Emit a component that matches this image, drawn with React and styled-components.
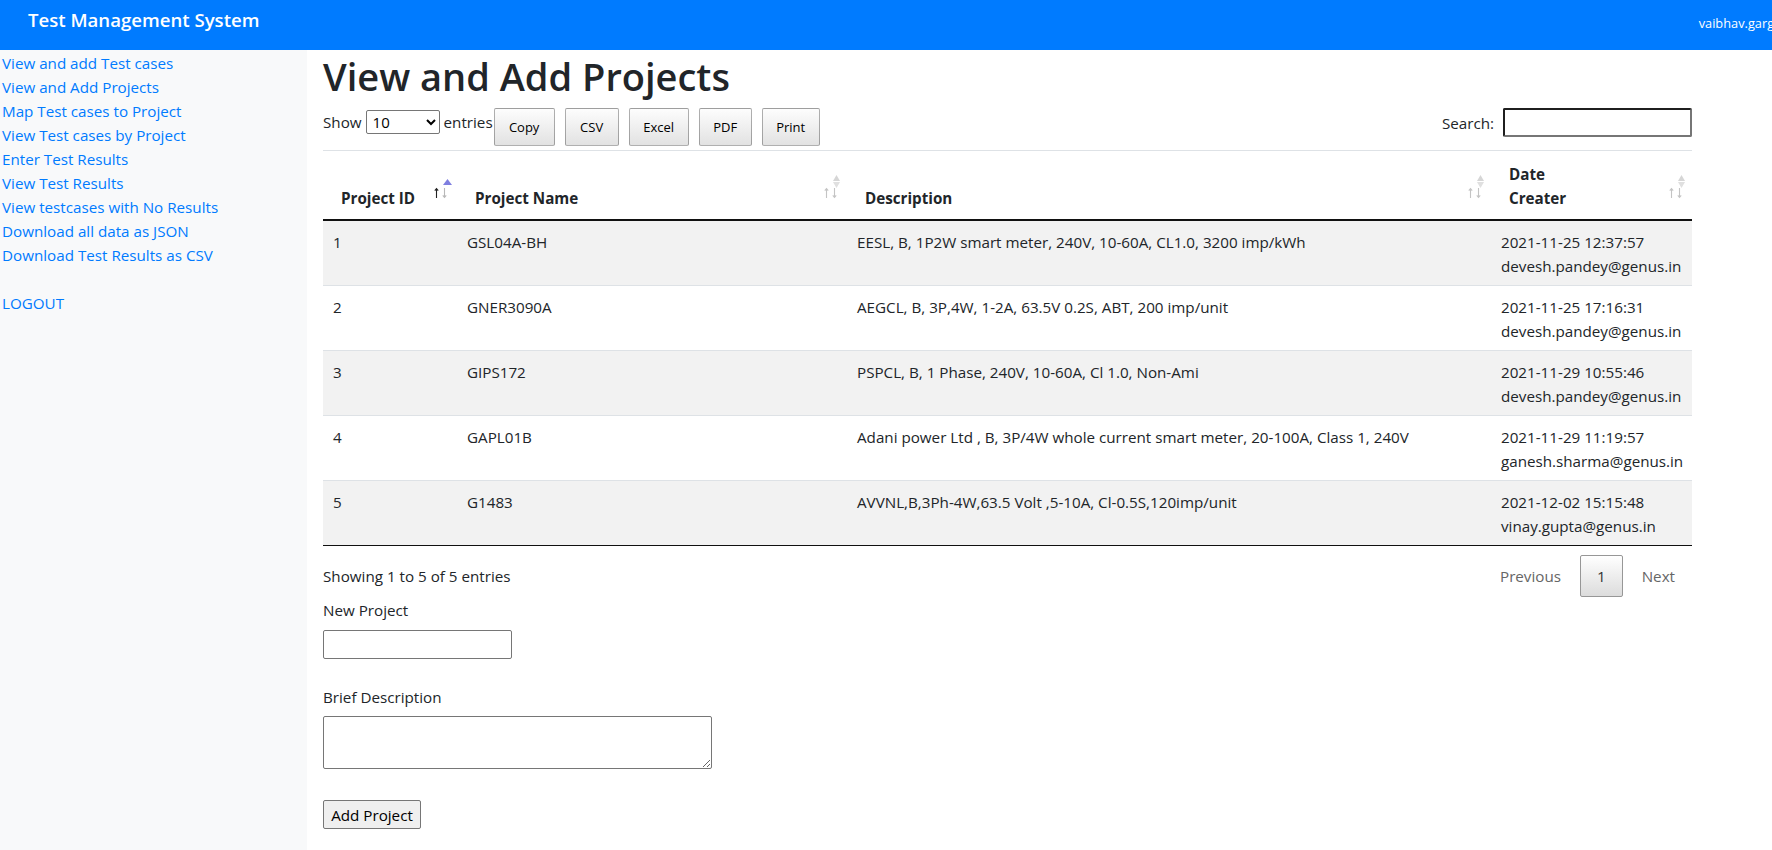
import React from 'react';
import styled, { createGlobalStyle } from 'styled-components';

const GlobalStyle = createGlobalStyle`
  body {
    margin: 0;
    font-family: "Open Sans", "Noto Sans", sans-serif;
    font-size: 15.2px;
    color: #212529;
    background: #fff;
    overflow: hidden;
  }
`;

const Nav = styled.nav`
  height: 50px;
  background: #007bff;
  display: flex;
  align-items: flex-start;
  padding-left: 28px;
  overflow: hidden;
`;

const Brand = styled.a`
  color: #fff;
  font-size: 18.6px;
  font-weight: 600;
  line-height: 24px;
  padding-top: 8px;
  text-decoration: none;
  white-space: nowrap;
`;

const User = styled.span`
  margin-left: auto;
  margin-right: -64px;
  padding-top: 13px;
  color: #fff;
  font-size: 12.8px;
  line-height: 20px;
  white-space: nowrap;
`;

const Layout = styled.div`
  display: flex;
  min-height: calc(100vh - 50px);
`;

const Sidebar = styled.aside`
  width: 307px;
  flex-shrink: 0;
  background: #f8f9fa;
  padding-top: 1px;
`;

const SideLink = styled.a`
  display: block;
  padding-left: 2px;
  line-height: 24px;
  color: #007bff;
  text-decoration: none;
  margin-top: ${(p) => (p.$spaced ? '24px' : '0')};
`;

const Main = styled.main`
  width: 1369px;
  padding: 2px 0 0 16px;
`;

const Heading = styled.h1`
  margin: 0 0 8px;
  font-size: 38px;
  font-weight: 600;
  line-height: 48px;
  color: #212529;
`;

const Toolbar = styled.div`
  display: flex;
  align-items: flex-start;
  height: 42px;
`;

const Length = styled.label`
  display: flex;
  align-items: center;
  height: 28px;
  gap: 4px;
`;

const Select = styled.select`
  width: 74px;
  height: 24px;
  font-family: inherit;
  font-size: 15px;
  border: 1px solid #767676;
  border-radius: 2px;
  background: #fff;
  color: #000;
  padding: 0 2px;
`;

const Buttons = styled.div`
  display: flex;
  gap: 10px;
  margin-left: 1px;
`;

const DtButton = styled.button`
  width: ${(p) => p.$w}px;
  height: 38px;
  padding: 0;
  font-family: inherit;
  font-size: 13px;
  color: #000;
  border: 1px solid rgba(0, 0, 0, 0.3);
  border-radius: 2px;
  background: linear-gradient(to bottom, #fdfdfd 0%, #e2e2e2 100%);
`;

const Search = styled.label`
  margin-left: auto;
  display: flex;
  align-items: center;
  gap: 9px;
  height: 29px;
`;

const SearchInput = styled.input`
  width: 189px;
  height: 29px;
  box-sizing: border-box;
  border: 2px solid;
  border-color: #1f1f1f #767676 #767676 #1f1f1f;
  border-radius: 2px;
  font-family: inherit;
`;

const Table = styled.table`
  width: 1369px;
  border-collapse: collapse;
  table-layout: fixed;
`;

const Th = styled.th`
  position: relative;
  width: ${(p) => p.$w}px;
  box-sizing: border-box;
  text-align: left;
  vertical-align: bottom;
  padding: 11px 18px 9px 18px;
  line-height: 24px;
  font-weight: 700;
  color: #212529;
  border-top: 1px solid #dee2e6;
  border-bottom: 2px solid #111;
`;

const Row = styled.tr`
  background: ${(p) => (p.$odd ? '#f2f2f2' : '#fff')};
  &:last-child td {
    border-bottom: 1px solid #111;
  }
`;

const Td = styled.td`
  vertical-align: top;
  padding: 9px 10px 7px;
  line-height: 24px;
  border-top: 1px solid #dee2e6;
`;

const IconBox = styled.span`
  position: absolute;
  right: 5px;
  bottom: 20px;
  width: 18px;
  height: 24px;
`;

const Footer = styled.div`
  display: flex;
  align-items: center;
  justify-content: space-between;
  padding-top: 9px;
`;

const Paginate = styled.div`
  display: flex;
  align-items: center;
  gap: 2px;
`;

const PageButton = styled.span`
  box-sizing: border-box;
  padding: 8px 16px;
  line-height: 24px;
  border-radius: 2px;
  color: ${(p) => (p.$current ? '#333' : '#666')};
  border: 1px solid ${(p) => (p.$current ? '#979797' : 'transparent')};
  background: ${(p) =>
    p.$current ? 'linear-gradient(to bottom, #fff 0%, #dcdcdc 100%)' : 'transparent'};
`;

const Form = styled.form`
  display: flex;
  flex-direction: column;
  align-items: flex-start;
  padding-top: 1px;
`;

const Label = styled.label`
  line-height: 24px;
  margin-top: ${(p) => p.$top || 0}px;
`;

const TextInput = styled.input`
  width: 189px;
  height: 29px;
  box-sizing: border-box;
  margin-top: 8px;
  border: 1px solid #767676;
  border-radius: 2px;
`;

const TextArea = styled.textarea`
  width: 389px;
  height: 53px;
  box-sizing: border-box;
  margin-top: 7px;
  border: 1px solid #767676;
  border-radius: 2px;
  resize: both;
`;

const Submit = styled.button`
  margin-top: 31px;
  width: 98px;
  height: 29px;
  padding: 0;
  font-family: inherit;
  font-size: 15.2px;
  color: #000;
  background: #efefef;
  border: 1px solid #767676;
  border-radius: 2px;
`;

const SortIcon = ({ active }) => (
  <IconBox>
    <svg width="18" height="24" viewBox="0 0 18 24">
      <path
        d="M2.5 13.5V23M0.8 15.6L2.5 13.5L4.2 15.6"
        fill="none"
        stroke={active ? '#222' : '#c4c4c4'}
        strokeWidth="1.1"
      />
      <path
        d="M10.5 13V22.5M8.8 20.4L10.5 22.5L12.2 20.4"
        fill="none"
        stroke={active ? '#b8b8b8' : '#c4c4c4'}
        strokeWidth="1.1"
      />
      {active ? (
        <polygon points="13.5,4 18,10 9,10" fill="#7f7fe0" />
      ) : (
        <>
          <polygon points="12.5,0 16,6 9,6" fill="#d6d6d6" />
          <polygon points="9,7 16,7 12.5,13" fill="#e0e0e0" />
        </>
      )}
    </svg>
  </IconBox>
);

const links = [
  'View and add Test cases',
  'View and Add Projects',
  'Map Test cases to Project',
  'View Test cases by Project',
  'Enter Test Results',
  'View Test Results',
  'View testcases with No Results',
  'Download all data as JSON',
  'Download Test Results as CSV',
];

const projects = [
  ['1', 'GSL04A-BH', 'EESL, B, 1P2W smart meter, 240V, 10-60A, CL1.0, 3200 imp/kWh', '2021-11-25 12:37:57', 'devesh.pandey@genus.in'],
  ['2', 'GNER3090A', 'AEGCL, B, 3P,4W, 1-2A, 63.5V 0.2S, ABT, 200 imp/unit', '2021-11-25 17:16:31', 'devesh.pandey@genus.in'],
  ['3', 'GIPS172', 'PSPCL, B, 1 Phase, 240V, 10-60A, Cl 1.0, Non-Ami', '2021-11-29 10:55:46', 'devesh.pandey@genus.in'],
  ['4', 'GAPL01B', 'Adani power Ltd , B, 3P/4W whole current smart meter, 20-100A, Class 1, 240V', '2021-11-29 11:19:57', 'ganesh.sharma@genus.in'],
  ['5', 'G1483', 'AVVNL,B,3Ph-4W,63.5 Volt ,5-10A, Cl-0.5S,120imp/unit', '2021-12-02 15:15:48', 'vinay.gupta@genus.in'],
];

export default function App() {
  return (
    <>
      <GlobalStyle />
      <Nav>
        <Brand href="#">Test Management System</Brand>
        <User>vaibhav.garg@genus.in</User>
      </Nav>
      <Layout>
        <Sidebar>
          {links.map((l) => (
            <SideLink key={l} href="#">{l}</SideLink>
          ))}
          <SideLink href="#" $spaced>LOGOUT</SideLink>
        </Sidebar>
        <Main>
          <Heading>View and Add Projects</Heading>
          <Toolbar>
            <Length>
              Show
              <Select defaultValue="10">
                <option>10</option>
                <option>25</option>
                <option>50</option>
                <option>100</option>
              </Select>
              entries
            </Length>
            <Buttons>
              <DtButton $w={61}>Copy</DtButton>
              <DtButton $w={54}>CSV</DtButton>
              <DtButton $w={60}>Excel</DtButton>
              <DtButton $w={53}>PDF</DtButton>
              <DtButton $w={58}>Print</DtButton>
            </Buttons>
            <Search>
              Search:
              <SearchInput type="search" />
            </Search>
          </Toolbar>
          <Table>
            <thead>
              <tr>
                <Th $w={134}>Project ID<SortIcon active /></Th>
                <Th $w={390}>Project Name<SortIcon /></Th>
                <Th $w={644}>Description<SortIcon /></Th>
                <Th $w={201}>Date<br />Creater<SortIcon /></Th>
              </tr>
            </thead>
            <tbody>
              {projects.map((p, i) => (
                <Row key={p[0]} $odd={i % 2 === 0}>
                  <Td>{p[0]}</Td>
                  <Td>{p[1]}</Td>
                  <Td>{p[2]}</Td>
                  <Td>{p[3]}<br />{p[4]}</Td>
                </Row>
              ))}
            </tbody>
          </Table>
          <Footer>
            <span>Showing 1 to 5 of 5 entries</span>
            <Paginate>
              <PageButton>Previous</PageButton>
              <PageButton $current>1</PageButton>
              <PageButton>Next</PageButton>
            </Paginate>
          </Footer>
          <Form onSubmit={(e) => e.preventDefault()}>
            <Label>New Project</Label>
            <TextInput type="text" />
            <Label $top={26}>Brief Description</Label>
            <TextArea />
            <Submit type="submit">Add Project</Submit>
          </Form>
        </Main>
      </Layout>
    </>
  );
}
